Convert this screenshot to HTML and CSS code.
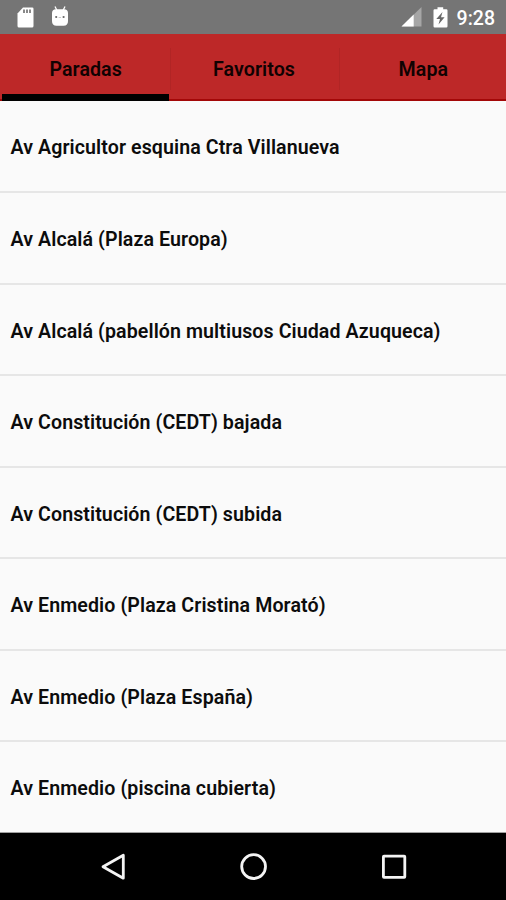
FILE: index.html
```html
<!DOCTYPE html>
<html lang="es">
<head>
<meta charset="utf-8">
<title>Paradas</title>
<link rel="stylesheet" href="styles.css">
</head>
<body>
<div class="screen">
  <header class="status">
    <svg class="icon-sd" width="17" height="21" viewBox="0 0 17 21"><path d="M6 0.5H15.2Q16.5 .5 16.5 1.8V19Q16.5 20.5 15 20.5H2Q.5 20.5 .5 19V6.5Z" fill="#fff"/><path d="M7 2.5v3.6M10 2.5v3.6M13 2.5v3.6" stroke="#757575" stroke-width="1.7"/></svg>
    <svg class="icon-droid" width="18" height="21" viewBox="0 0 18 21"><path d="M4 .5l2 4M14 .5l-2 4" stroke="#fff" stroke-width="1.3"/><path d="M1 7Q1 3.2 5 3.2H13Q17 3.2 17 7V15Q17 19.7 12.5 19.7H5.5Q1 19.7 1 15Z" fill="#fff"/><circle cx="5.2" cy="11" r="1.1" fill="#666"/><circle cx="12.6" cy="11" r="1.1" fill="#666"/><path d="M7.6 11.5h2.4" stroke="#ccc"/></svg>
    <span class="gap"></span>
    <svg class="icon-signal" width="21" height="20" viewBox="0 0 21 20"><path d="M.5 19.5L20.5 0V19.5Z" fill="#a6a6a6"/><path d="M.5 19.5L12.7 7.5V19.5Z" fill="#fff"/></svg>
    <svg class="icon-battery" width="15" height="21" viewBox="0 0 15 21"><path d="M4.5 .3H10.2V2.2H13.3Q14.5 2.2 14.5 3.5V19.2Q14.5 20.5 13.3 20.5H1.7Q.5 20.5 .5 19.2V3.5Q.5 2.2 1.7 2.2H4.5Z" fill="#fff"/><path d="M9.5 5L3.3 12H7L5.5 17.5L11.6 10.3H8Z" fill="#686868"/></svg>
    <span class="clock">9:28</span>
  </header>
  <nav class="tabs">
    <div class="tab tab-active">Paradas</div>
    <div class="tab">Favoritos</div>
    <div class="tab">Mapa</div>
  </nav>
  <ul class="stops">
    <li>Av Agricultor esquina Ctra Villanueva</li>
    <li>Av Alcalá (Plaza Europa)</li>
    <li>Av Alcalá (pabellón multiusos Ciudad Azuqueca)</li>
    <li>Av Constitución (CEDT) bajada</li>
    <li>Av Constitución (CEDT) subida</li>
    <li>Av Enmedio (Plaza Cristina Morató)</li>
    <li>Av Enmedio (Plaza España)</li>
    <li>Av Enmedio (piscina cubierta)</li>
  </ul>
  <footer class="navbar">
    <svg width="28" height="30" viewBox="0 0 28 30"><path d="M4 14.7L24.3 3.2V26.2Z" fill="none" stroke="#f4f4f4" stroke-width="2.8" stroke-linejoin="round"/></svg>
    <svg width="28" height="30" viewBox="0 0 28 30"><circle cx="13.6" cy="14.6" r="11.9" fill="none" stroke="#f4f4f4" stroke-width="2.8"/></svg>
    <svg width="28" height="30" viewBox="0 0 28 30"><rect x="3.4" y="4.2" width="21.4" height="21.2" rx=".6" fill="none" stroke="#f4f4f4" stroke-width="2.8"/></svg>
  </footer>
</div>
</body>
</html>
```
FILE: styles.css
```css
body {
  margin: 0;
  font-family: Roboto, sans-serif;
  color: #0c0c0c;
}
.screen {
  display: flex;
  flex-direction: column;
  width: 506px;
  height: 900px;
  overflow: hidden;
  background: #fafafa;
}
.status {
  display: flex;
  align-items: flex-start;
  box-sizing: border-box;
  height: 34px;
  padding: 7px 11px 0 17px;
  background: #757575;
}
.icon-droid {
  margin: -1px 0 0 17px;
}
.gap {
  flex: 1;
}
.icon-battery {
  margin-left: 11px;
}
.clock {
  margin-left: 9px;
  color: #fff;
  font-size: 19.5px;
  font-weight: 500;
  line-height: 24px;
}
.tabs {
  display: grid;
  grid-template-columns: repeat(3, 1fr);
  gap: 1px;
  box-sizing: border-box;
  height: 67px;
  padding-left: 2px;
  background: linear-gradient(#bd2828 65px, #a30808 65px);
}
.tab {
  box-sizing: border-box;
  height: 67px;
  text-align: center;
  font-size: 19.6px;
  font-weight: 600;
  letter-spacing: 0.09px;
  line-height: 72px;
  color: #100202;
}
.tab + .tab {
  background: linear-gradient(#b12525, #b12525) 0 14px / 1px 42px no-repeat;
}
.tab:last-child {
  padding-left: 2px;
}
.tab-active {
  border-bottom: 7px solid #000;
}
.stops {
  display: grid;
  grid-template-rows: 92px repeat(6, 91.5px) 91px;
  margin: 0;
  padding: 0;
  list-style: none;
}
.stops li {
  box-sizing: border-box;
  padding-left: 10.5px;
  border-bottom: 2px solid #e6e6e6;
  font-size: 19.6px;
  font-weight: 600;
  letter-spacing: 0.09px;
  line-height: 93px;
  white-space: nowrap;
}
.stops li:first-child {
  line-height: 94px;
}
.stops li:last-child {
  border-bottom-color: #a0a0a0;
  border-bottom-width: 1px;
}
.navbar {
  display: flex;
  flex: 1;
  justify-content: space-between;
  box-sizing: border-box;
  padding: 19px 98px 0 99px;
  background: #000;
}
```
